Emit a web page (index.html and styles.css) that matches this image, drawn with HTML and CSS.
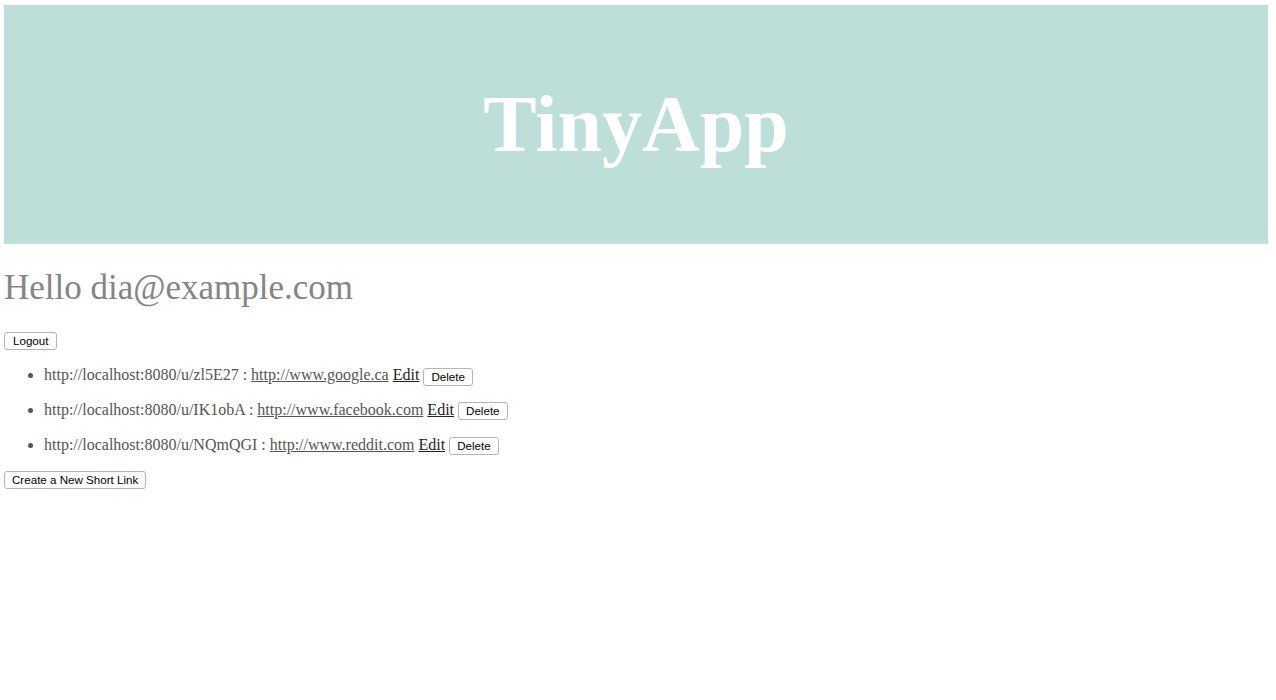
FILE: index.html
```html
<!DOCTYPE html>
<html>
<head>
<meta charset="utf-8">
<link rel="stylesheet" href="styles.css">
</head>
<body>
<header class="banner"><h1 class="brand">TinyApp</h1></header>
<h2 class="hello">Hello dia@example.com</h2>
<form class="logout"><button class="btn" type="button">Logout</button></form>
<ul class="urls">
  <li class="url">http://localhost:8080/u/zl5E27 : <a class="long" href="#">http://www.google.ca</a> <a class="edit" href="#">Edit</a> <button class="btn" type="button">Delete</button></li>
  <li class="url">http://localhost:8080/u/IK1obA : <a class="long" href="#">http://www.facebook.com</a> <a class="edit" href="#">Edit</a> <button class="btn" type="button">Delete</button></li>
  <li class="url">http://localhost:8080/u/NQmQGI : <a class="long" href="#">http://www.reddit.com</a> <a class="edit" href="#">Edit</a> <button class="btn" type="button">Delete</button></li>
</ul>
<form class="create"><button class="btn" type="button">Create a New Short Link</button></form>
</body>
</html>
```
FILE: styles.css
```css
html, body { background: #fff; }
body {
  margin: 5px 8px 0 4px;
  font-family: "Liberation Serif", "Times New Roman", serif;
  color: #555;
}
.banner {
  background: #bedfd9;
  height: 239px;
  display: flex;
  align-items: center;
  justify-content: center;
}
.brand {
  margin: 0;
  color: #fff;
  font-size: 80px;
  font-weight: bold;
  line-height: 1;
  padding-bottom: 2px;
}
.hello {
  margin: 23px 0 0;
  font-size: 35px;
  font-weight: normal;
  color: #858585;
  line-height: 42px;
}
.logout { margin: 22px 0 0; }
.btn {
  font-family: "Liberation Sans", Arial, sans-serif;
  font-size: 11.6px;
  color: #000;
  background: #fff;
  border: 1px solid #b5b5b5;
  border-radius: 3px;
  padding: 1px 7px;
  height: 18px;
  line-height: 14px;
  vertical-align: middle;
}
.logout .btn { padding: 1px 8px; }
.urls {
  margin: 15px 0 0;
  padding-left: 40px;
  font-size: 16px;
}
.url {
  line-height: 19px;
  margin-bottom: 14.5px;
}
.long { color: #555; }
.edit { color: #222; }
.create { margin: 0; }
```
